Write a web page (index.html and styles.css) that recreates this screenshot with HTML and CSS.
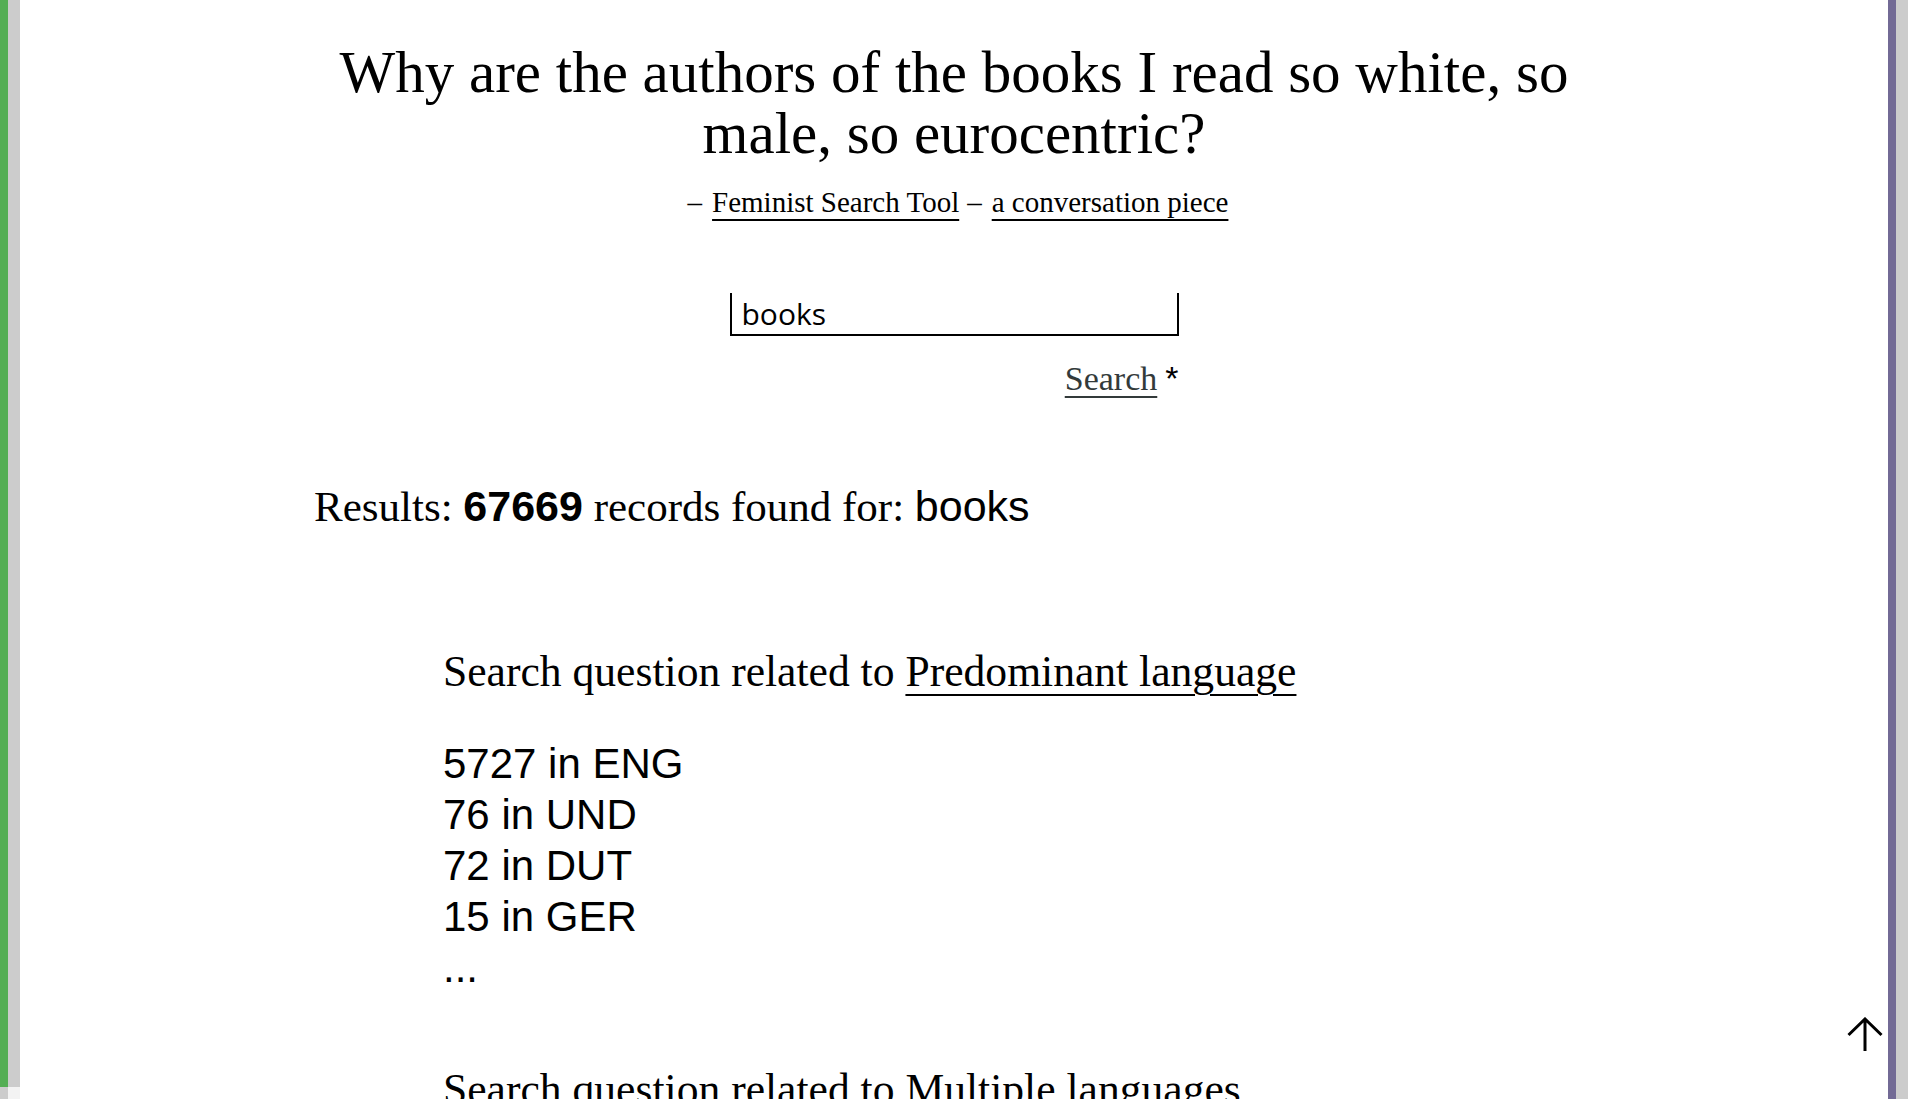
FILE: index.html
```html
<!DOCTYPE html>
<html lang="en">
<head>
<meta charset="utf-8">
<title>Feminist Search Tool</title>
<link rel="stylesheet" href="styles.css">
</head>
<body>
<div class="frame">
  <div class="rail-left">
    <span class="rl-green"></span>
    <span class="rl-grey"></span>
    <span class="rl-corner-a"></span>
    <span class="rl-corner-b"></span>
  </div>
  <main class="page">
    <div class="container">
      <h1 class="title">Why are the authors of the books I read so white, so male, so eurocentric?</h1>
      <p class="subtitle"><span class="dash">–</span><a href="#">Feminist Search Tool</a><span class="dash">–</span><a href="#">a conversation piece</a></p>
      <form class="search-form">
        <input class="search-input" type="text" value="books">
        <div class="search-row"><a href="#" class="search-link">Search</a><span class="star">*</span></div>
      </form>
      <p class="results">Results: <b class="sans">67669</b> records found for: <span class="sans">books</span></p>
      <section class="question">
        <h2 class="q-title">Search question related to <a href="#">Predominant language</a></h2>
        <ul class="q-list">
          <li>5727 in ENG</li>
          <li>76 in UND</li>
          <li>72 in DUT</li>
          <li>15 in GER</li>
          <li>...</li>
        </ul>
      </section>
      <section class="question">
        <h2 class="q-title">Search question related to <a href="#">Multiple languages</a></h2>
        <ul class="q-list">
          <li>1203 in ENG</li>
        </ul>
      </section>
    </div>
  </main>
  <div class="rail-right">
    <span class="rr-purple"></span>
    <span class="rr-grey"></span>
  </div>
</div>
<a href="#" class="to-top" aria-label="Back to top">
  <svg width="36" height="34" viewBox="0 0 36 34" fill="none" stroke="#000" stroke-width="3">
    <path d="M18 2 V34 M1.5 18 L18 2 L34.5 18"/>
  </svg>
</a>
</body>
</html>
```
FILE: styles.css
```css
html, body {
  margin: 0;
  padding: 0;
  height: 100%;
  background: #fff;
}
body {
  font-family: "Liberation Sans", Arial, sans-serif;
  color: #000;
  overflow: hidden;
}
.frame {
  display: flex;
  height: 100vh;
}
.rail-left {
  flex: 0 0 20px;
  display: grid;
  grid-template-columns: 8px 12px;
  grid-template-rows: 1fr 12px;
}
.rl-green { background: #54ae54; }
.rl-grey { background: #cccccc; }
.rl-corner-a { background: #cccccc; }
.rl-corner-b { background: #f3f3f3; }
.rail-right {
  flex: 0 0 20px;
  display: grid;
  grid-template-columns: 8px 12px;
}
.rr-purple { background: #726a95; }
.rr-grey { background: #cccccc; }
.page {
  flex: 1 1 auto;
  overflow: hidden;
  background: #fff;
}
.container {
  width: 1280px;
  margin: 0 auto;
  padding-top: 42px;
}
.title {
  margin: 0;
  font-family: "Liberation Serif", "Times New Roman", serif;
  font-weight: normal;
  font-size: 59px;
  line-height: 61px;
  text-align: center;
}
.subtitle {
  margin: 22px 0 0;
  font-family: "Liberation Serif", "Times New Roman", serif;
  font-size: 29px;
  line-height: 32px;
  text-align: center;
}
.subtitle .dash {
  margin: 0 10px 0 8px;
}
.subtitle a {
  color: #000;
  text-decoration: underline;
  text-decoration-thickness: 2px;
  text-underline-offset: 7px;
}
.search-form {
  width: 449px;
  margin: 75px auto 0;
  display: flex;
  flex-direction: column;
}
.search-input {
  box-sizing: border-box;
  width: 449px;
  height: 43px;
  margin: 0;
  padding: 0 10px;
  border: 2px solid #000;
  border-top: 0;
  border-radius: 0;
  outline: none;
  background: transparent;
  font-family: "Open Sans", "DejaVu Sans", sans-serif;
  font-size: 30px;
  color: #000;
}
.search-row {
  margin-top: 23px;
  display: flex;
  justify-content: flex-end;
  align-items: baseline;
  font-family: "Liberation Serif", "Times New Roman", serif;
  font-size: 34px;
  line-height: 38px;
}
.search-link {
  color: #333a3a;
  text-decoration: underline;
  text-decoration-thickness: 2px;
  text-underline-offset: 6px;
}
.star {
  margin-left: 8px;
  font-family: "Liberation Sans", Arial, sans-serif;
  color: #000;
}
.results {
  margin: 83px 0 0;
  font-family: "Liberation Serif", "Times New Roman", serif;
  font-size: 43px;
  line-height: 50px;
}
.sans {
  font-family: "Liberation Sans", Arial, sans-serif;
}
.question {
  padding-left: 129px;
  margin-top: 114px;
}
.question + .question {
  margin-top: 71px;
}
.q-title {
  margin: 0;
  font-family: "Liberation Serif", "Times New Roman", serif;
  font-weight: normal;
  font-size: 43.6px;
  line-height: 50px;
}
.q-title a {
  color: #000;
  text-decoration: underline;
  text-decoration-thickness: 2px;
  text-underline-offset: 8px;
}
.q-list {
  list-style: none;
  margin: 42px 0 0;
  padding: 0;
  font-family: "Liberation Sans", Arial, sans-serif;
  font-size: 42px;
  line-height: 51px;
}
.to-top {
  position: fixed;
  right: 25px;
  bottom: 48px;
  display: block;
  width: 36px;
  height: 34px;
}
.to-top svg {
  display: block;
}
```
